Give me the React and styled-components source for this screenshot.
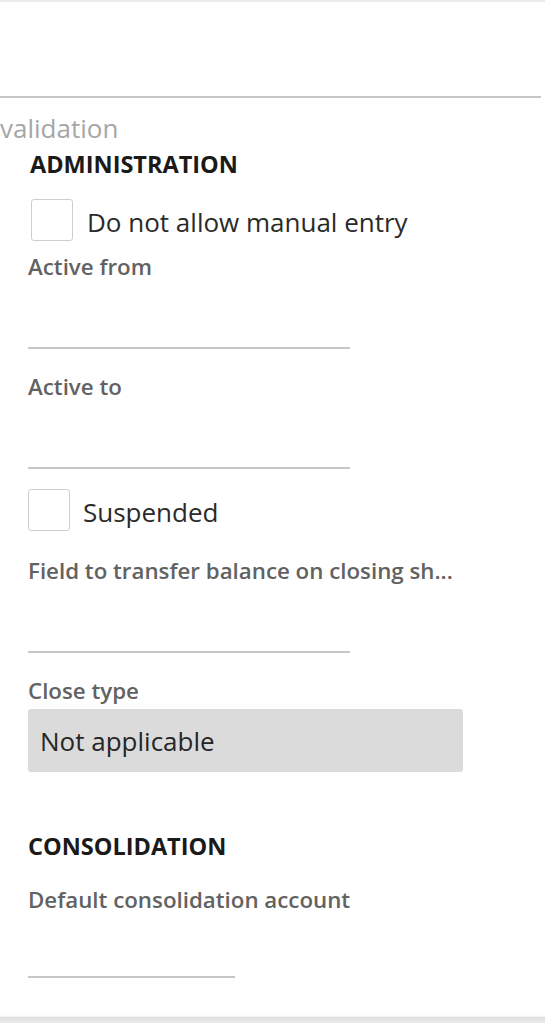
import React from "react";
import styled, { createGlobalStyle } from "styled-components";

const GlobalStyle = createGlobalStyle`
  html, body {
    margin: 0;
    padding: 0;
    background: #ffffff;
  }
  body {
    font-family: "Open Sans", "Noto Sans", sans-serif;
  }
`;

const Page = styled.div`
  display: flex;
  flex-direction: column;
  min-height: 1023px;
  border-top: 2px solid #ececec;
  box-sizing: border-box;
  overflow: hidden;
`;

const Header = styled.div`
  height: 94px;
  margin-right: 4px;
  border-bottom: 2px solid #c8c6c4;
`;

const Content = styled.div`
  flex: 1;
  display: flex;
  flex-direction: column;
`;

const Overflow = styled.div`
  margin-top: 15px;
  height: 30px;
  line-height: 30px;
  font-size: 26px;
  color: #a6a6a6;
  white-space: nowrap;
`;

const Section = styled.div`
  display: flex;
  flex-direction: column;
  padding-left: 28px;
`;

const SectionTitle = styled.h2`
  margin: ${({ $top }) => $top}px 0 0 ${({ $indent }) => $indent || 0}px;
  height: 30px;
  line-height: 30px;
  font-size: 23.5px;
  font-weight: 700;
  color: #1b1a19;
  text-transform: uppercase;
`;

const CheckRow = styled.label`
  display: flex;
  align-items: center;
  gap: ${({ $gap }) => $gap || 13}px;
  margin-top: ${({ $top }) => $top}px;
  margin-left: ${({ $indent }) => $indent || 0}px;
  height: 42px;
`;

const Box = styled.span`
  width: 42px;
  height: 42px;
  box-sizing: border-box;
  border: 1.5px solid #cfcfcf;
  border-radius: 3px;
  background: #ffffff;
  flex-shrink: 0;
`;

const CheckText = styled.span`
  font-size: 26px;
  line-height: 42px;
  padding-top: 3px;
  color: #2b2a29;
  white-space: nowrap;
`;

const Label = styled.div`
  margin-top: ${({ $top }) => $top}px;
  height: 28px;
  line-height: 28px;
  font-size: 22.3px;
  font-weight: 600;
  color: #626262;
  white-space: nowrap;
`;

const Underline = styled.div`
  width: ${({ $width }) => $width}px;
  height: ${({ $height }) => $height}px;
  border-bottom: 2px solid #c8c6c4;
`;

const SelectBox = styled.div`
  margin-top: 4.5px;
  width: 435px;
  height: 63px;
  box-sizing: border-box;
  padding: 2px 0 0 12px;
  border-radius: 3px;
  background: #dbdbdb;
  font-size: 26px;
  line-height: 61px;
  color: #262626;
`;

const Footer = styled.div`
  height: 6px;
  background: linear-gradient(#dedede, #ececec);
  box-shadow: 0 -1px 2px rgba(0, 0, 0, 0.06);
`;

function CheckField({ label, top, indent, gap }) {
  return (
    <CheckRow $top={top} $indent={indent} $gap={gap}>
      <Box />
      <CheckText>{label}</CheckText>
    </CheckRow>
  );
}

function TextField({ label, top, width = 322, height = 66 }) {
  return (
    <>
      <Label $top={top}>{label}</Label>
      <Underline $width={width} $height={height} />
    </>
  );
}

export default function App() {
  return (
    <>
      <GlobalStyle />
      <Page>
        <Header />
        <Content>
          <Overflow>validation</Overflow>
          <Section>
            <SectionTitle $top={6} $indent={2}>
              Administration
            </SectionTitle>
            <CheckField label="Do not allow manual entry" top={20} indent={3} gap={14} />
            <TextField label="Active from" top={12} />
            <TextField label="Active to" top={24} />
            <CheckField label="Suspended" top={20} />
            <TextField label="Field to transfer balance on closing sh..." top={25.5} />
            <Label $top={24}>Close type</Label>
            <SelectBox>Not applicable</SelectBox>
            <SectionTitle $top={59}>Consolidation</SectionTitle>
            <TextField
              label="Default consolidation account"
              top={24.5}
              width={207}
              height={62.5}
            />
          </Section>
        </Content>
        <Footer />
      </Page>
    </>
  );
}
